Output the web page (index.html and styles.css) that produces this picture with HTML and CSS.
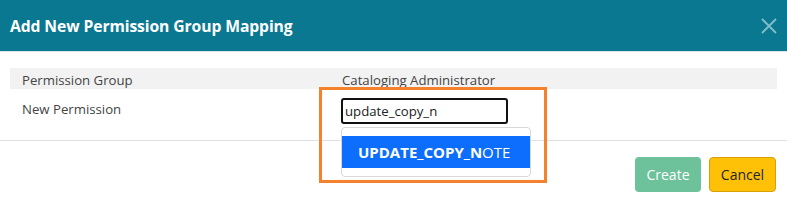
FILE: index.html
```html
<!DOCTYPE html>
<html lang="en">
<head>
    <meta charset="UTF-8">
    <title>Add New Permission Group Mapping</title>
    <link rel="stylesheet" href="styles.css">
</head>
<body>
    <div class="modal">
        <div class="modal-header">
            <div class="modal-title">Add New Permission Group Mapping</div>
            <button class="close-btn" aria-label="Close">
                <svg width="16" height="16" viewBox="0 0 16 16">
                    <path d="M1 1 L15 15 M15 1 L1 15" stroke="#80bfca" stroke-width="1.8" fill="none"/>
                </svg>
            </button>
        </div>

        <div class="modal-body">
            <table class="info-table">
                <tr class="row-grey">
                    <td class="label">Permission Group</td>
                    <td>Cataloging Administrator</td>
                </tr>
                <tr>
                    <td class="label">New Permission</td>
                    <td class="input-cell">
                        <div class="typeahead">
                            <input type="text" class="perm-input" value="update_copy_n">
                            <ul class="suggestions">
                                <li class="active"><b>UPDATE_COPY_N</b><span>OTE</span></li>
                            </ul>
                        </div>
                    </td>
                </tr>
            </table>
        </div>

        <div class="modal-footer">
            <button class="btn btn-create" disabled>Create</button>
            <button class="btn btn-cancel">Cancel</button>
        </div>

        <!-- highlight box from the screenshot -->
        <div class="annotation"></div>
    </div>
</body>
</html>
```

FILE: styles.css
```css
body {
    margin: 0;
    padding: 0;
    background-color: white;
    font-family: "Open Sans", "Noto Sans", Arial, sans-serif;
    color: #333;
}
.modal {
    position: relative;
    width: 787px;
    height: 204px;
    background-color: white;
}
.modal-header {
    height: 52px;
    box-sizing: border-box;
    background-color: #0a7891;
    border-bottom: 1px solid #e3e6e8;
    display: flex;
    align-items: center;
    justify-content: space-between;
    padding: 0 10px;
}
.modal-title {
    color: white;
    font-weight: bold;
    font-size: 15.7px;
    letter-spacing: -0.1px;
}
.close-btn {
    background: none;
    border: none;
    padding: 0;
    width: 16px;
    height: 16px;
    display: flex;
    cursor: pointer;
}
.modal-body {
    padding: 16px 10px 16px 10px;
}
.info-table {
    width: 100%;
    border-collapse: collapse;
    font-size: 13.2px;
    color: #444;
}
.info-table td {
    padding: 0 12px;
    vertical-align: middle;
}
.info-table td.label {
    width: 296px;
}
.row-grey {
    background-color: #f2f2f2;
    height: 21px;
}
.row-grey td {
    padding-top: 2px;
}
.input-cell {
    height: 35px;
    padding-top: 8px !important;
    box-sizing: border-box;
}
.info-table tr:last-child td.label {
    padding-top: 4px;
}
.typeahead {
    position: relative;
    margin-left: -1px;
}
.perm-input {
    display: block;
    width: 167px;
    height: 26px;
    box-sizing: border-box;
    border: 2px solid #111;
    border-radius: 3px;
    padding: 0 2px;
    font-family: inherit;
    font-size: 13.2px;
    color: #222;
    outline: none;
}
.suggestions {
    position: absolute;
    top: 29px;
    left: 0;
    width: 190px;
    box-sizing: border-box;
    margin: 0;
    padding: 8px 0;
    list-style: none;
    background-color: white;
    border: 1px solid #d8d8d8;
    border-radius: 4px;
    z-index: 2;
}
.suggestions li {
    height: 32px;
    line-height: 32px;
    padding: 0 16px;
    font-size: 15px;
    color: white;
}
.suggestions li b,
.suggestions li span {
    font-size: 15px;
}
.suggestions li.active {
    background-color: #0d6efd;
}
.modal-footer {
    border-top: 1px solid #dee2e6;
    display: flex;
    justify-content: flex-end;
    gap: 8px;
    padding: 16px 11px 0 0;
}
.btn {
    height: 35px;
    padding: 0 8px;
    font-family: inherit;
    font-size: 14px;
    border-radius: 4px;
    border: 1px solid transparent;
}
.btn-create {
    background-color: #6dc29b;
    color: white;
    width: 66px;
}
.btn-cancel {
    background-color: #ffc107;
    border-color: #d8a000;
    color: #212529;
    width: 67px;
    cursor: pointer;
}
.annotation {
    position: absolute;
    left: 319px;
    top: 87px;
    width: 228px;
    height: 96px;
    box-sizing: border-box;
    border: 3px solid #f5812d;
    z-index: 3;
}
```
